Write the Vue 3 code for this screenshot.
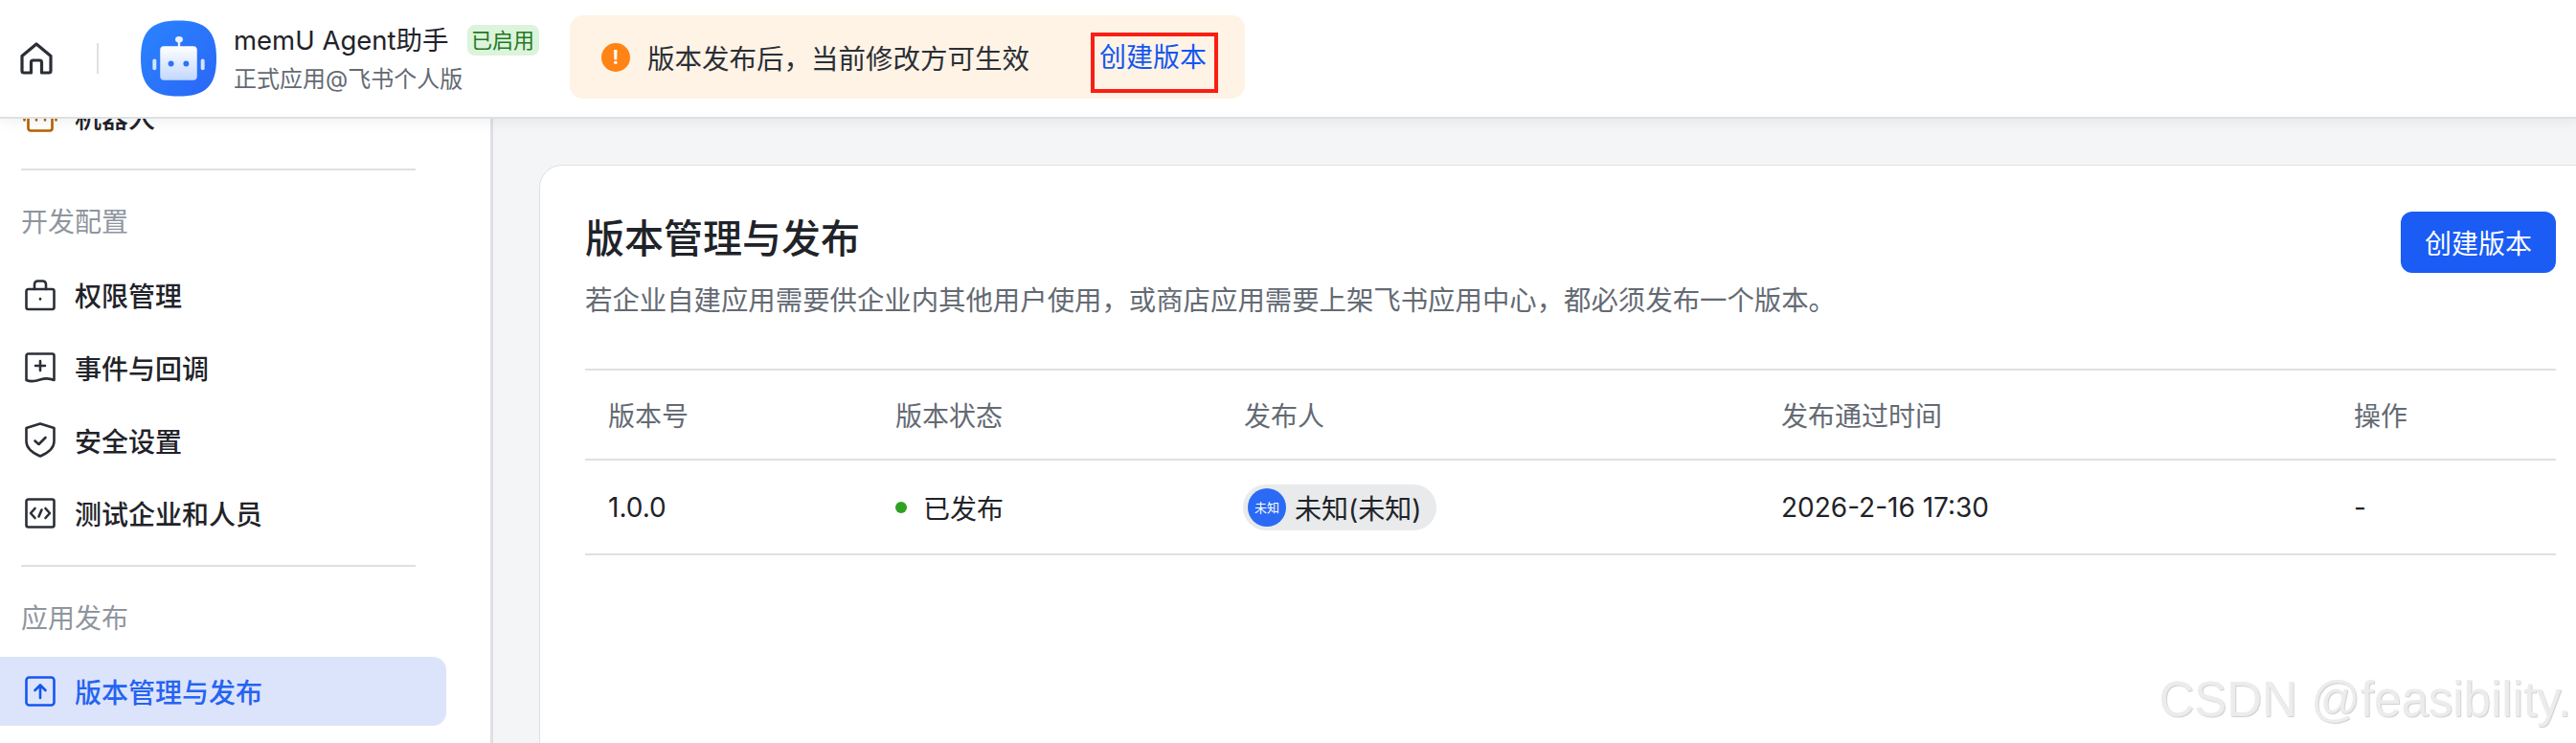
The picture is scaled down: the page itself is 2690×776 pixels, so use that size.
<template>
  <div class="page">
    <header class="topbar">
      <svg class="home" viewBox="0 0 34 34" fill="none" stroke="#2b2f36" stroke-width="3.2" stroke-linejoin="round" stroke-linecap="round">
        <path d="M2 14.5 17 2l15 12.5V30a2 2 0 0 1-2 2h-7.5V21a2 2 0 0 0-2-2h-7a2 2 0 0 0-2 2v11H4a2 2 0 0 1-2-2z" />
      </svg>
      <span class="top-sep"></span>
      <svg class="logo" viewBox="0 0 80 80">
        <defs>
          <linearGradient id="tile" x1="0" y1="0" x2="1" y2="1">
            <stop offset="0" stop-color="#2a84ff" />
            <stop offset="1" stop-color="#2a66f6" />
          </linearGradient>
          <linearGradient id="bot" x1="0" y1="0" x2="0" y2="1">
            <stop offset="0" stop-color="#fff" />
            <stop offset="1" stop-color="#c2d7ff" />
          </linearGradient>
        </defs>
        <path d="M40 0C68 0 80 10 80 40S68 80 40 80 0 70 0 40 12 0 40 0z" fill="url(#tile)" />
        <ellipse cx="40.500" cy="20" rx="4" ry="3.200" fill="#eaf1ff" />
        <rect x="39.300" y="21" width="2.400" height="7" fill="#eaf1ff" />
        <rect x="20.500" y="27" width="39" height="36" rx="4" fill="url(#bot)" />
        <rect x="12.500" y="40.500" width="4" height="12" rx="2" fill="#d5e3ff" />
        <rect x="63.500" y="40.500" width="4" height="12" rx="2" fill="#d5e3ff" />
        <circle cx="32" cy="45.500" r="3" fill="#2a74fd" />
        <circle cx="48" cy="45.500" r="3" fill="#2a74fd" />
      </svg>
      <div class="app-info">
        <div class="app-line">
          <span class="app-name">memU Agent助手</span>
          <span class="app-tag">已启用</span>
        </div>
        <div class="app-sub">正式应用@飞书个人版</div>
      </div>
      <div class="notice">
        <span class="notice-icon">!</span>
        <span class="notice-text">版本发布后，当前修改方可生效</span>
        <a class="notice-link">创建版本</a>
      </div>
    </header>

    <div class="body">
      <aside class="sidebar">
        <div class="side-scroll">
          <div class="nav-item">
            <svg class="nav-icon" viewBox="0 0 32 32" fill="none" stroke="#b85f00" stroke-width="2.6" stroke-linecap="round">
              <rect x="3.500" y="7" width="25" height="23.500" rx="2.500" />
              <path d="M-.5 16v3.500M32.500 16v3.500M12 19v.5M21 19v.5" />
            </svg>
            <span>机器人</span>
          </div>
          <div class="side-sep"></div>
          <div class="side-label">开发配置</div>
          <div v-for="item in devItems" :key="item.text" class="nav-item">
            <svg class="nav-icon" viewBox="0 0 32 32" fill="none" stroke="#2b2f36" stroke-width="2.6" stroke-linecap="round" stroke-linejoin="round">
              <path v-for="d in item.paths" :key="d" :d="d" />
            </svg>
            <span>{{ item.text }}</span>
          </div>
          <div class="side-sep second"></div>
          <div class="side-label last">应用发布</div>
          <div class="nav-item active">
            <svg class="nav-icon" viewBox="0 0 32 32" fill="none" stroke="#1456f0" stroke-width="2.6" stroke-linecap="round" stroke-linejoin="round">
              <rect x="1.500" y="1.500" width="29" height="29" rx="3" />
              <path d="M16 23V10M10.500 15 16 9.500l5.500 5.500" />
            </svg>
            <span>版本管理与发布</span>
          </div>
        </div>
      </aside>

      <main class="main">
        <section class="card">
          <div class="card-head">
            <div>
              <h1>版本管理与发布</h1>
              <p>若企业自建应用需要供企业内其他用户使用，或商店应用需要上架飞书应用中心，都必须发布一个版本。</p>
            </div>
            <button class="primary">创建版本</button>
          </div>

          <div class="table">
            <div class="t-row t-head">
              <span v-for="col in columns" :key="col">{{ col }}</span>
            </div>
            <div class="t-row t-body">
              <span>1.0.0</span>
              <span class="status"><i class="dot"></i>已发布</span>
              <span class="chip"><b class="avatar">未知</b>未知(未知)</span>
              <span>2026-2-16 17:30</span>
              <span>-</span>
            </div>
          </div>
        </section>
      </main>
    </div>

    <div class="watermark">CSDN @feasibility.</div>
  </div>
</template>

<script setup>
const columns = ['版本号', '版本状态', '发布人', '发布通过时间', '操作']

const devItems = [
  {
    text: '权限管理',
    paths: [
      'M1.500 12a2 2 0 0 1 2-2h25a2 2 0 0 1 2 2v17a2 2 0 0 1-2 2h-25a2 2 0 0 1-2-2z',
      'M10 10V5a3.500 3.500 0 0 1 3.500-3.500h5A3.500 3.500 0 0 1 22 5v5',
      'M16 20v.4',
    ],
  },
  {
    text: '事件与回调',
    paths: [
      'M3.500 1.500h25a2 2 0 0 1 2 2V29c-4.500-2-10-2-14.500-.5S6 31 1.500 29V3.500a2 2 0 0 1 2-2z',
      'M16 9v10M11 14h10',
    ],
  },
  {
    text: '安全设置',
    paths: [
      'M16-1.500 30.500 3v14c0 7-7.500 12.500-14.500 15.500C9 29.500 1.500 24 1.500 17V3z',
      'M10.500 16.500 14.500 20l7-7',
    ],
  },
  {
    text: '测试企业和人员',
    paths: [
      'M3.500 1.500h25a2 2 0 0 1 2 2v25a2 2 0 0 1-2 2h-25a2 2 0 0 1-2-2v-25a2 2 0 0 1 2-2z',
      'M10.500 11 6 16l4.500 5M21.500 11l4.500 5-4.500 5M17.500 12.500 14.500 19.500',
    ],
  },
]
</script>

<style>
html,
body {
  margin: 0;
  background: #f4f5f7;
}
</style>

<style scoped>
.page {
  position: relative;
  width: 2690px;
  height: 776px;
  overflow: hidden;
  display: flex;
  flex-direction: column;
  font-family: Inter, "Noto Sans CJK SC", sans-serif;
  font-size: 28px;
  color: #1f2329;
}

.topbar {
  position: relative;
  z-index: 2;
  flex: none;
  box-sizing: border-box;
  height: 124px;
  padding-left: 21px;
  display: flex;
  align-items: center;
  background: #fff;
  border-bottom: 2px solid #dee0e3;
  box-shadow: 0 2px 14px rgba(31, 35, 41, 0.08);
}
.home {
  width: 34px;
  height: 34px;
}
.top-sep {
  width: 2px;
  height: 32px;
  margin: 0 44px 0 46px;
  background: #dee0e3;
}
.logo {
  width: 79px;
  height: 80px;
}
.app-info {
  margin-left: 18px;
  width: 351px;
}
.app-line {
  display: flex;
  align-items: center;
  gap: 19px;
  height: 40px;
}
.app-name {
  font-size: 27.5px;
  line-height: 40px;
}
.app-tag {
  width: 75px;
  height: 32px;
  line-height: 32px;
  text-align: center;
  border-radius: 8px;
  font-size: 22px;
  color: #1f7a1f;
  background: #dcf3dc;
}
.app-sub {
  margin-top: 4px;
  font-size: 24px;
  line-height: 34px;
  color: #646a73;
}

.notice {
  width: 705px;
  height: 87px;
  margin-top: -3px;
  box-sizing: border-box;
  padding-left: 33px;
  display: flex;
  align-items: center;
  border-radius: 14px;
  background: #fff3e5;
}
.notice-icon {
  width: 30px;
  height: 30px;
  border-radius: 50%;
  background: #ff8315;
  color: #fff;
  font-size: 20px;
  font-weight: 700;
  line-height: 30px;
  text-align: center;
}
.notice-text {
  margin-left: 18px;
  width: 397px;
  font-size: 28.500px;
  white-space: nowrap;
  color: #2b2f36;
}
.notice-link {
  margin-left: 66px;
  width: 133px;
  height: 63px;
  box-sizing: border-box;
  padding: 0 0 0 5px;
  margin-top: 12px;
  border: 4px solid #fa1e14;
  line-height: 44px;
  color: #1456f0;
  white-space: nowrap;
}

.body {
  flex: 1;
  min-height: 0;
  display: flex;
}

.sidebar {
  flex: none;
  width: 515px;
  box-sizing: border-box;
  overflow: hidden;
  background: #fff;
  border-right: 3px solid #dee0e3;
}
.side-scroll {
  margin-top: -40px;
}
.nav-item {
  height: 76px;
  display: flex;
  align-items: center;
  gap: 20px;
  padding-left: 26px;
  font-weight: 500;
  white-space: nowrap;
}
.nav-icon {
  flex: none;
  width: 32px;
  height: 32px;
  overflow: visible;
}
.side-sep {
  width: 412px;
  height: 2px;
  margin: 16px 0 0 22px;
  background: #dee0e3;
}
.side-label {
  margin: 33px 0 17px 22px;
  line-height: 42px;
  color: #8f959e;
}
.side-label.last {
  margin-bottom: 19px;
}
.nav-item.active {
  width: 466px;
  height: 72px;
  box-sizing: border-box;
  border-radius: 0 14px 14px 0;
  background: #dce4fb;
  color: #2563f2;
}

.main {
  flex: 1;
  min-width: 0;
  overflow: hidden;
  padding: 48px 0 0 48px;
}
.card {
  box-sizing: border-box;
  height: 720px;
  margin-right: -30px;
  padding: 48px 50px 0 47px;
  background: #fff;
  border: 1px solid #dee0e3;
  border-radius: 24px;
}
.card-head {
  display: flex;
  justify-content: space-between;
  height: 164px;
}
.card-head h1 {
  margin: 0;
  font-size: 41px;
  font-weight: 500;
  line-height: 56px;
}
.card-head p {
  margin: 17px 0 0;
  font-size: 28.400px;
  line-height: 40px;
  color: #646a73;
}
.primary {
  width: 162px;
  height: 64px;
  border: 0;
  border-radius: 12px;
  background: #1a5cf4;
  color: #fff;
  font: inherit;
}

.table {
  border-top: 2px solid #dee0e3;
}
.t-row {
  display: grid;
  grid-template-columns: 300px 364px 561px 598px 1fr;
  align-items: center;
  box-sizing: border-box;
  padding-left: 24px;
  border-bottom: 2px solid #dee0e3;
}
.t-head {
  height: 94px;
  color: #646a73;
}
.t-body {
  height: 99px;
}
.status {
  display: flex;
  align-items: center;
}
.dot {
  width: 12px;
  height: 12px;
  margin: 0 17px 0 0;
  border-radius: 50%;
  background: #2ea121;
}
.chip {
  justify-self: start;
  width: 202px;
  height: 48px;
  box-sizing: border-box;
  margin-left: -1px;
  padding-left: 5px;
  display: flex;
  align-items: center;
  gap: 9px;
  border-radius: 24px;
  background: #e9eaeb;
  white-space: nowrap;
}
.avatar {
  width: 40px;
  height: 40px;
  border-radius: 50%;
  background: #2a6af5;
  color: #fff;
  font-size: 13px;
  font-weight: 400;
  line-height: 40px;
  text-align: center;
}

.watermark {
  position: absolute;
  right: 5px;
  top: 700px;
  z-index: 3;
  font-family: "Liberation Sans", sans-serif;
  font-size: 51px;
  line-height: 62px;
  color: #ececec;
  text-shadow: 1px 1px 1px #cfcfcf;
  white-space: nowrap;
}
</style>
